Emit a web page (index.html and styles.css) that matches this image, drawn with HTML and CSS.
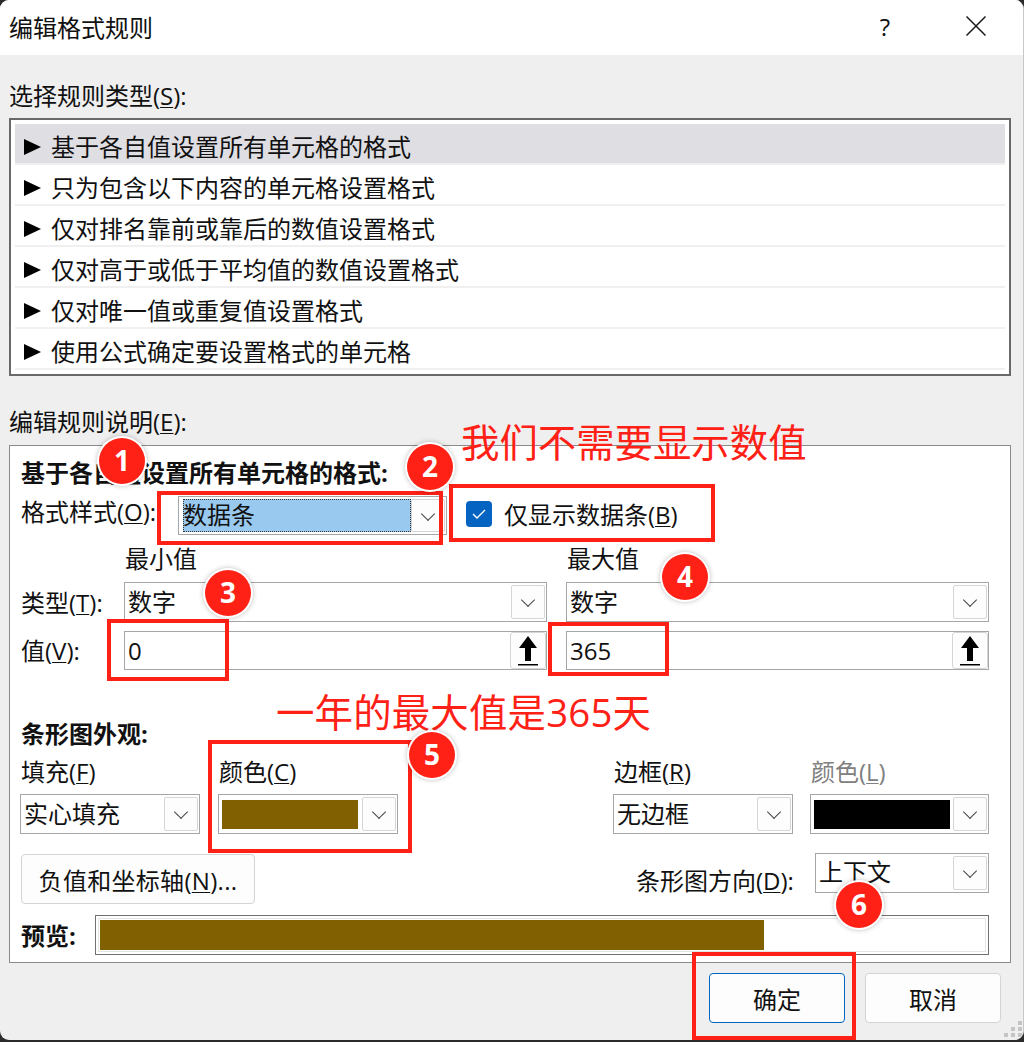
FILE: index.html
```html
<!DOCTYPE html>
<html lang="zh-CN">
<head>
  <meta charset="UTF-8">
  <title>编辑格式规则</title>
  <link rel="stylesheet" href="styles.css">
</head>
<body>
  <div class="dialog">
    <header class="titlebar">
      <span class="titlebar__title">编辑格式规则</span>
      <span class="titlebar__help">?</span>
      <svg class="titlebar__close" width="20" height="20" viewBox="0 0 20 20"><path d="M0.5 0.5L19.5 19.5M19.5 0.5L0.5 19.5" stroke="#1a1a1a" stroke-width="1.5" fill="none"/></svg>
    </header>

    <div class="content">
      <div class="line rule-label">选择规则类型(<u>S</u>):</div>
      <ul class="rule-list">
        <li class="rule-list__item rule-list__item--active">基于各自值设置所有单元格的格式</li>
        <li class="rule-list__item">只为包含以下内容的单元格设置格式</li>
        <li class="rule-list__item">仅对排名靠前或靠后的数值设置格式</li>
        <li class="rule-list__item">仅对高于或低于平均值的数值设置格式</li>
        <li class="rule-list__item">仅对唯一值或重复值设置格式</li>
        <li class="rule-list__item">使用公式确定要设置格式的单元格</li>
      </ul>

      <div class="line desc-label">编辑规则说明(<u>E</u>):</div>
      <section class="group">
        <div class="line line--bold">基于各自值设置所有单元格的格式:</div>

        <div class="style-row">
          <div class="line style-row__label">格式样式(<u>O</u>):</div>
          <div class="sel sel--style">
            <span class="sel__focus">数据条</span>
            <span class="sel__btn"></span>
          </div>
          <span class="check">
            <svg width="14" height="10" viewBox="0 0 14 10"><path d="M1 5L5 9L13 1" stroke="#fff" stroke-width="1.4" fill="none"/></svg>
          </span>
          <div class="line check-label">仅显示数据条(<u>B</u>)</div>
        </div>

        <div class="range-grid">
          <div></div>
          <div class="line range-grid__head">最小值</div>
          <div class="line range-grid__head">最大值</div>

          <div class="line range-grid__label">类型(<u>T</u>):</div>
          <div class="sel sel--range"><span class="sel__text">数字</span><span class="sel__btn"></span></div>
          <div class="sel sel--range"><span class="sel__text">数字</span><span class="sel__btn"></span></div>

          <div class="line range-grid__label range-grid__label--value">值(<u>V</u>):</div>
          <div class="sel sel--value">
            <span class="sel__text">0</span>
            <span class="ref-btn"><svg width="20" height="30" viewBox="0 0 20 30"><path d="M10 0L19 12H13V25H7V12H1Z" fill="#000"/><rect y="28" width="20" height="1.5" fill="#000"/></svg></span>
          </div>
          <div class="sel sel--value">
            <span class="sel__text">365</span>
            <span class="ref-btn"><svg width="20" height="30" viewBox="0 0 20 30"><path d="M10 0L19 12H13V25H7V12H1Z" fill="#000"/><rect y="28" width="20" height="1.5" fill="#000"/></svg></span>
          </div>
        </div>

        <div class="line line--bold bar-head">条形图外观:</div>
        <div class="bar-grid">
          <div class="field">
            <div class="line field__label">填充(<u>F</u>)</div>
            <div class="sel sel--bar"><span class="sel__text">实心填充</span><span class="sel__btn"></span></div>
          </div>
          <div class="field">
            <div class="line field__label">颜色(<u>C</u>)</div>
            <div class="sel sel--bar"><span class="swatch swatch--brown"></span><span class="sel__btn"></span></div>
          </div>
          <div class="field">
            <div class="line field__label">边框(<u>R</u>)</div>
            <div class="sel sel--bar"><span class="sel__text">无边框</span><span class="sel__btn"></span></div>
          </div>
          <div class="field">
            <div class="line field__label field__label--off">颜色(<u>L</u>)</div>
            <div class="sel sel--bar"><span class="swatch swatch--black"></span><span class="sel__btn"></span></div>
          </div>
        </div>

        <div class="axis-row">
          <button class="btn btn--axis">负值和坐标轴(<u>N</u>)...</button>
          <div class="line axis-row__label">条形图方向(<u>D</u>):</div>
          <div class="sel sel--dir"><span class="sel__text sel__text--up">上下文</span><span class="sel__btn"></span></div>
        </div>

        <div class="preview-row">
          <div class="line line--bold preview-row__label">预览:</div>
          <div class="preview">
            <div class="preview__inner"><div class="preview__bar"></div></div>
          </div>
        </div>
      </section>

      <footer class="footer">
        <button class="btn btn--primary">确定</button>
        <button class="btn">取消</button>
      </footer>
    </div>

    <svg class="grip" width="20" height="16" viewBox="0 0 20 16" fill="#c4c4c4">
      <rect x="15" y="0" width="4" height="4"/>
      <rect x="8" y="6" width="4" height="4"/><rect x="15" y="6" width="4" height="4"/>
      <rect x="1" y="12" width="4" height="4"/><rect x="8" y="12" width="4" height="4"/><rect x="15" y="12" width="4" height="4"/>
    </svg>

    <!-- annotations drawn over the dialog -->
    <div class="note note--top">我们不需要显示数值</div>
    <div class="note note--mid">一年的最大值是365天</div>

    <div class="mark mark--a"></div>
    <div class="mark mark--b"></div>
    <div class="mark mark--c"></div>
    <div class="mark mark--d"></div>
    <div class="mark mark--e"></div>
    <div class="mark mark--f"></div>

    <div class="num num--1">1</div>
    <div class="num num--2">2</div>
    <div class="num num--3">3</div>
    <div class="num num--4">4</div>
    <div class="num num--5">5</div>
    <div class="num num--6">6</div>
  </div>
</body>
</html>
```

FILE: styles.css
```css
* {
  margin: 0;
  padding: 0;
  box-sizing: border-box;
}

body {
  background: #2b2b2b;
  font-family: "Open Sans", "Noto Sans CJK SC", sans-serif;
  font-size: 24px;
  color: #111;
  height: 1042px;
  overflow: hidden;
}

u {
  text-underline-offset: 2px;
  text-decoration-thickness: 1px;
}

.line {
  height: 30px;
  line-height: 30px;
  white-space: nowrap;
}

.line--bold {
  font-weight: 700;
}

.dialog {
  position: relative;
  width: 1024px;
  height: 1040px;
  background: #efefef;
  border-radius: 9px;
  border-right: 1px solid #c8c8c8;
  overflow: hidden;
}

/* title bar */
.titlebar {
  display: flex;
  align-items: center;
  height: 55px;
  padding: 0 37px 3px 9px;
  background: #fff;
}

.titlebar__title {
  flex: 1;
}

.titlebar__help {
  font-size: 24px;
  margin-right: 76px;
}

/* rule type list */
.content {
  padding-top: 26px;
}

.rule-label {
  margin-left: 9px;
  margin-bottom: 7px;
}

.rule-list {
  list-style: none;
  width: 1002px;
  height: 258px;
  margin-left: 9px;
  padding: 4px;
  background: #fff;
  border: 2px solid #696969;
}

.rule-list__item {
  position: relative;
  height: 41px;
  line-height: 45px;
  padding-left: 36px;
  background: #fff;
  border-bottom: 2px solid #f0f0f0;
  white-space: nowrap;
}

.rule-list__item::before {
  content: "";
  position: absolute;
  left: 9px;
  top: 15px;
  border-left: 17px solid #000;
  border-top: 8px solid transparent;
  border-bottom: 8px solid transparent;
}

.rule-list__item--active {
  background: #dfdee3;
}

.desc-label {
  margin: 31px 0 8px 9px;
}

/* group box */
.group {
  width: 1002px;
  height: 518px;
  margin-left: 9px;
  padding: 12px 21px 0 11px;
  background: #fff;
  border: 1px solid #8a8a8a;
}

.style-row {
  display: flex;
  align-items: flex-start;
  height: 39px;
  margin-top: 8px;
}

.style-row__label {
  width: 157px;
  margin-top: 1px;
}

.check {
  display: flex;
  align-items: center;
  justify-content: center;
  width: 26px;
  height: 26px;
  margin: 5px 12px 0 19px;
  background: #0563c1;
  border-radius: 4px;
}

.check-label {
  margin-top: 4px;
}

/* comboboxes */
.sel {
  display: flex;
  align-items: center;
  justify-content: space-between;
  background: #fff;
  border: 1px solid #a6a6a6;
  padding-right: 1px;
}

.sel__text {
  padding-left: 3px;
  line-height: 30px;
}

.sel__btn {
  position: relative;
  flex: none;
  width: 34px;
  height: calc(100% - 4px);
  background: #fdfdfd;
  border: 1px solid #d6d6d6;
  border-radius: 2px;
}

.sel__btn::after {
  content: "";
  position: absolute;
  left: 11px;
  top: 9px;
  width: 9px;
  height: 9px;
  border-right: 1px solid #444;
  border-bottom: 1px solid #444;
  transform: rotate(45deg);
}

.sel--style {
  width: 269px;
  height: 39px;
  padding-left: 4px;
}

.sel__focus {
  width: 228px;
  height: 33px;
  line-height: 32px;
  background: #99c9ee;
  outline: 1px dotted #333;
  outline-offset: -1px;
}

.sel--range {
  height: 40px;
}

.sel--value {
  height: 39px;
}

.sel--bar {
  width: 180px;
  height: 40px;
}

.sel--dir {
  width: 174px;
  height: 40px;
  margin-left: auto;
}

.sel__text--up {
  margin-top: -3px;
}

.ref-btn {
  display: flex;
  justify-content: center;
  align-items: center;
  width: 36px;
  height: 37px;
  margin-right: -1px;
  background: #fdfdfd;
  border: 1px solid #d6d6d6;
  border-radius: 3px;
}

.swatch {
  width: 136px;
  height: 29px;
  margin-left: 3px;
}

.swatch--brown {
  background: #806000;
}

.swatch--black {
  background: #000;
}

/* min / max */
.range-grid {
  display: grid;
  grid-template-columns: 103px 423px 442px;
  margin-top: 9px;
}

.range-grid > :nth-child(3n) {
  margin-left: 19px;
}

.range-grid > :nth-child(n + 7) {
  margin-top: 9px;
}

.range-grid > :nth-child(-n + 3) {
  margin-bottom: 8px;
}

.range-grid__head {
  padding-left: 1px;
}

.range-grid__label {
  margin-top: 6px;
}

.range-grid__label--value {
  margin-top: 14px !important;
}

.bar-head {
  margin-top: 49px;
}

/* bar appearance */
.bar-grid {
  display: grid;
  grid-template-columns: 198px 395px 197px 179px;
  margin: 8px 0 0 -1px;
}

.field__label {
  padding-left: 1px;
  margin-bottom: 7px;
}

.field__label--off {
  color: #808080;
}

.field .sel {
  width: 100%;
  max-width: 180px;
}

.axis-row {
  display: flex;
  align-items: flex-start;
  height: 51px;
  margin-top: 19px;
}

.axis-row__label {
  margin: 13px 0 0 381px;
}

.btn {
  width: 136px;
  height: 50px;
  font: inherit;
  color: inherit;
  background: #fdfdfd;
  border: 1px solid #d4d4d4;
  border-radius: 4px;
}

.btn--axis {
  width: 234px;
  margin-top: 1px;
  letter-spacing: 0.3px;
}

.btn--primary {
  border-color: #0067c0;
}

.preview-row {
  display: flex;
  margin-top: 11px;
}

.preview-row__label {
  width: 74px;
  margin-top: 6px;
}

.preview {
  width: 894px;
  height: 40px;
  padding: 2px;
  background: #fff;
  border: 1px solid #707070;
}

.preview__inner {
  height: 34px;
  padding: 1px;
  border: 1px solid #e4e4e4;
}

.preview__bar {
  width: 664px;
  height: 30px;
  background: #806000;
}

.footer {
  display: flex;
  justify-content: flex-end;
  gap: 20px;
  margin-top: 10px;
  padding-right: 22px;
}

.grip {
  position: absolute;
  right: 0;
  bottom: 3px;
}

/* red annotations */
.note {
  position: absolute;
  font-size: 38.4px;
  line-height: 50px;
  color: #ff2116;
  white-space: nowrap;
}

.note--top {
  left: 461px;
  top: 417px;
}

.note--mid {
  left: 276px;
  top: 687px;
  letter-spacing: 0.2px;
}

.mark {
  position: absolute;
  border: 4px solid #ff2116;
}

.mark--a { left: 157px; top: 491px; width: 286px; height: 54px; }
.mark--b { left: 449px; top: 484px; width: 266px; height: 58px; }
.mark--c { left: 107px; top: 619px; width: 122px; height: 62px; }
.mark--d { left: 548px; top: 622px; width: 121px; height: 54px; }
.mark--e { left: 208px; top: 740px; width: 204px; height: 113px; }
.mark--f { left: 692px; top: 952px; width: 164px; height: 88px; }

.num {
  position: absolute;
  width: 46px;
  height: 46px;
  line-height: 44px;
  text-align: center;
  font-size: 28px;
  font-weight: 700;
  color: #fff;
  background: #ff2116;
  border-radius: 50%;
  box-shadow: 0 0 0 2px #fff, 0 0 5px 2px rgba(0, 0, 0, 0.25);
}

.num--1 { left: 99px; top: 438px; }
.num--2 { left: 407px; top: 444px; }
.num--3 { left: 205px; top: 570px; }
.num--4 { left: 662px; top: 554px; }
.num--5 { left: 409px; top: 732px; }
.num--6 { left: 836px; top: 882px; }
```
